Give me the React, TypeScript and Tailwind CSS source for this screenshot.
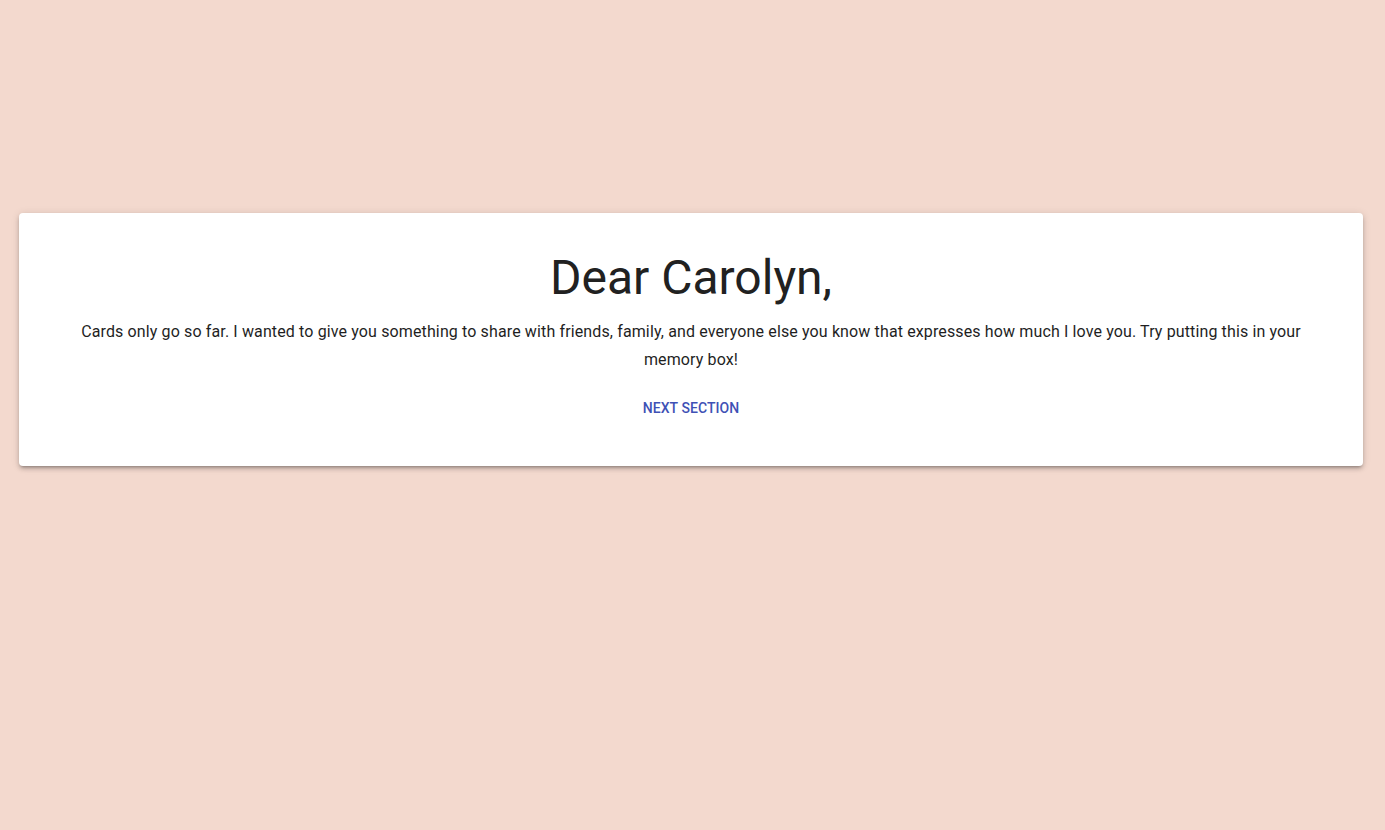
export default function App() {
  return (
    <div className="min-h-[830px] w-full bg-[#f3d9ce] pt-[213px] font-['Roboto',sans-serif]">
      <div className="ml-[19px] w-[1344px] rounded-[4px] bg-white px-[40px] pt-[37px] pb-[40px] text-center shadow-[0_3px_3px_-2px_rgba(0,0,0,0.25),0_3px_4px_0_rgba(0,0,0,0.16),0_1px_8px_0_rgba(0,0,0,0.12)]">
        <h1 className="text-[48px] leading-[1.167] font-normal text-[#212121]">Dear Carolyn,</h1>
        <p className="mt-[12px] text-[16px] leading-[28px] tracking-[0.008em] text-[#1f1f1f]">
          Cards only go so far. I wanted to give you something to share with friends, family, and everyone else you know that
          expresses how much I love you. Try putting this in your memory box!
        </p>
        <div className="mt-[16px] flex justify-center">
          <button className="h-[36px] rounded-[4px] px-[8px] text-[14px] font-medium uppercase tracking-[0.005em] text-[#3f51b5]">
            Next Section
          </button>
        </div>
      </div>
    </div>
  );
}
